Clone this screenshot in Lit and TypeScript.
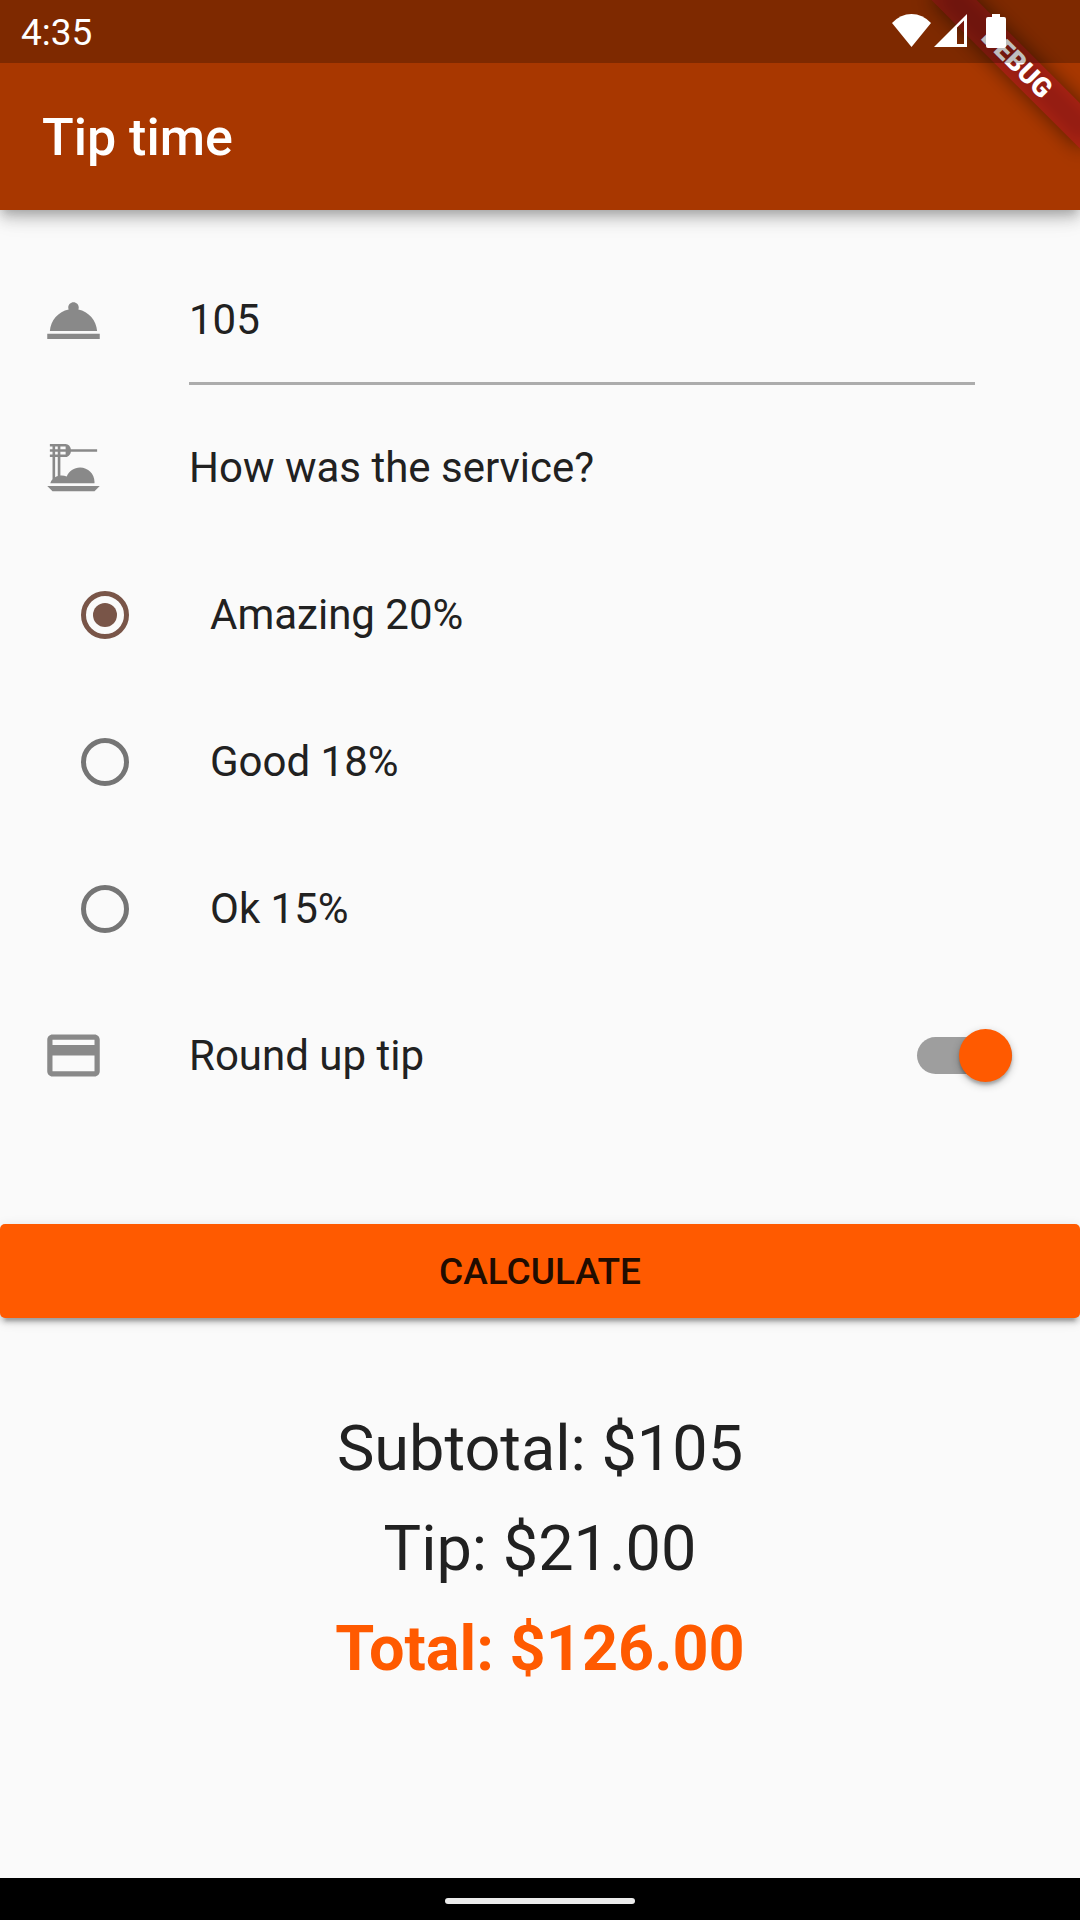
import { LitElement, html, svg, css } from "lit";
import { customElement, property, state } from "lit/decorators.js";

const ICONS = {
  bell: svg`<path d="M2 17h20v2H2zm11.84-9.21c.1-.24.16-.51.16-.79 0-1.1-.9-2-2-2s-2 .9-2 2c0 .28.06.55.16.79C6.25 8.6 3.27 11.93 3 16h18c-.27-4.07-3.25-7.4-7.16-8.21z" />`,
  dining: svg`<path fill-rule="evenodd" d="M2 19h20l-2 2H4zM5 6h1v1H5zM5 4h1v1H5zM9 4v1H7V4zM9 7H7V6h2zM6 15.23c-.36.11-.69.28-1 .47V8h1zM4 16.52c-.38.44-.68.93-.84 1.48h16.82c.01-.16.03-.33.03-.5 0-3.04-2.46-5.5-5.5-5.5-2.29 0-4.25 1.4-5.08 3.4-.64-.25-1.27-.4-1.93-.4-.17 0-.33.02-.5.04V8h2c1.03.06 1.9-.96 2-2h10V5H11c-.1-1.05-.97-1.97-2-2H3v1h1v1H3v1h1v1H3v1h1z" />`,
  card: svg`<path d="M20 4H4c-1.11 0-1.99.89-1.99 2L2 18c0 1.11.89 2 2 2h16c1.11 0 2-.89 2-2V6c0-1.11-.89-2-2-2zm0 14H4v-6h16v6zm0-10H4V6h16v2z" />`,
};

@customElement("tip-icon")
class TipIcon extends LitElement {
  @property() name: keyof typeof ICONS = "bell";

  static styles = css`
    :host {
      display: block;
      flex: none;
      width: 63px;
      height: 63px;
      color: #898989;
    }
    .glyph {
      display: block;
      width: 100%;
      height: 100%;
      fill: currentColor;
    }
  `;

  render() {
    return html`<svg class="glyph" viewBox="0 0 24 24" aria-hidden="true">${ICONS[this.name]}</svg>`;
  }
}

@customElement("status-bar")
class StatusBar extends LitElement {
  static styles = css`
    :host {
      display: flex;
      align-items: flex-start;
      justify-content: space-between;
      box-sizing: border-box;
      height: 63px;
      padding: 0 74px 0 21px;
      background: rgba(0, 0, 0, 0.25);
      color: #fff;
      font-size: 37px;
      line-height: 66px;
    }
    .icons {
      display: block;
      width: 114px;
      height: 34px;
      margin-top: 14px;
      fill: #fff;
    }
  `;

  render() {
    return html`
      <time>4:35</time>
      <svg class="icons" viewBox="0 0 114 34" aria-hidden="true">
        <path d="M19.5 33L0 9Q8.500 0 19.5 0T39 9z" />
        <path fill-rule="evenodd" d="M42 33L75 0V33zM65 13.5V30H72V6.5z" />
        <path d="M100 0h8v3h4q2 0 2 2v27q0 2-2 2h-16q-2 0-2-2V5q0-2 2-2h4z" />
      </svg>
    `;
  }
}

@customElement("app-root")
class AppRoot extends LitElement {
  @state() private cost = "105";
  @state() private rate = 20;
  @state() private roundUp = true;
  @state() private result = { subtotal: "105", tip: 21, total: 126 };

  private options = [
    { label: "Amazing 20%", rate: 20 },
    { label: "Good 18%", rate: 18 },
    { label: "Ok 15%", rate: 15 },
  ];

  static styles = css`
    :host {
      display: flex;
      flex-direction: column;
      min-height: 100vh;
      background: #fafafa;
      color: #212121;
      font-family: Roboto, "Liberation Sans", sans-serif;
      font-size: 42px;
      line-height: 50px;
    }
    .header {
      position: relative;
      background: #a83700;
      box-shadow: 0 5px 10px -3px rgba(0, 0, 0, 0.2), 0 10px 13px rgba(0, 0, 0, 0.14),
        0 3px 26px rgba(0, 0, 0, 0.12);
    }
    .status {
      position: relative;
      z-index: 2;
    }
    .title {
      display: flex;
      align-items: center;
      box-sizing: border-box;
      height: 147px;
      margin: 0;
      padding: 2px 42px 0;
      color: #fff;
      font-size: 52px;
      font-weight: 500;
      line-height: 62px;
    }
    .corner {
      position: absolute;
      top: 0;
      right: 0;
      z-index: 1;
      width: 210px;
      height: 210px;
      overflow: hidden;
      pointer-events: none;
    }
    .ribbon {
      position: absolute;
      top: 47px;
      left: 42px;
      width: 210px;
      height: 32px;
      transform: rotate(45deg);
      color: #fff;
      font-size: 27px;
      font-weight: 900;
      line-height: 32px;
      text-align: center;
    }
    .ribbon::before,
    .ribbon::after {
      content: "";
      position: absolute;
      inset: 0;
      z-index: -1;
      background: rgba(183, 28, 28, 0.63);
    }
    .ribbon::before {
      background: rgba(0, 0, 0, 0.5);
      filter: blur(10px);
    }
    .main {
      display: flex;
      flex: 1;
      flex-direction: column;
    }
    .form {
      padding-top: 37px;
    }
    .options {
      margin: 0;
      padding: 0;
      border: 0;
    }
    .row {
      display: flex;
      align-items: center;
      gap: 84px;
      height: 147px;
      padding: 0 42px;
    }
    .label {
      flex: 1;
    }
    .cost {
      flex: 1;
      min-width: 0;
      box-sizing: border-box;
      height: 129px;
      margin-right: 63px;
      padding: 0;
      border: 0;
      border-bottom: 3px solid #acacac;
      border-radius: 0;
      outline: 0;
      background: none;
      color: inherit;
      font: inherit;
    }
    .option {
      gap: 81px;
      padding-left: 81px;
    }
    .radio {
      appearance: none;
      display: grid;
      place-content: center;
      flex: none;
      box-sizing: border-box;
      width: 48px;
      height: 48px;
      margin: 0;
      border: 5px solid #757575;
      border-radius: 50%;
    }
    .radio:checked {
      border-color: #795548;
    }
    .radio:checked::before {
      content: "";
      width: 24px;
      height: 24px;
      border-radius: 50%;
      background: #795548;
    }
    .switch {
      appearance: none;
      display: flex;
      align-items: center;
      flex: none;
      width: 95px;
      height: 37px;
      margin: 0 26px 0 0;
      border-radius: 19px;
      background: #9e9e9e;
    }
    .switch::before {
      content: "";
      width: 53px;
      height: 53px;
      flex: none;
      border-radius: 50%;
      background: #fafafa;
      box-shadow: 0 3px 3px rgba(0, 0, 0, 0.2), 0 3px 8px rgba(0, 0, 0, 0.24);
    }
    .switch:checked::before {
      margin-left: auto;
      background: #ff5a00;
    }
    .calculate {
      height: 94px;
      margin: 95px 0 0;
      padding: 2px 42px 0;
      border: 0;
      border-radius: 5px;
      background: #ff5a00;
      box-shadow: 0 8px 3px -5px rgba(0, 0, 0, 0.2), 0 5px 5px rgba(0, 0, 0, 0.14),
        0 3px 13px rgba(0, 0, 0, 0.12);
      color: #210c00;
      font: inherit;
      font-size: 37px;
      font-weight: 500;
      text-transform: uppercase;
    }
    .results {
      padding: 81px 42px;
      font-size: 63px;
      line-height: 100px;
      text-align: center;
    }
    .line {
      margin: 0;
    }
    .total {
      color: #ff5a00;
      font-weight: 700;
    }
    .nav {
      display: grid;
      place-content: center;
      height: 42px;
      padding-top: 4px;
      box-sizing: border-box;
      background: #000;
    }
    .pill {
      width: 190px;
      height: 6px;
      border-radius: 3px;
      background: #ebebeb;
    }
  `;

  private calculate() {
    const amount = Number(this.cost) || 0;
    const raw = (amount * this.rate) / 100;
    const tip = this.roundUp ? Math.ceil(raw) : raw;
    this.result = { subtotal: String(amount), tip, total: amount + tip };
  }

  render() {
    const { subtotal, tip, total } = this.result;
    return html`
      <header class="header">
        <status-bar class="status"></status-bar>
        <h1 class="title">Tip time</h1>
        <div class="corner"><div class="ribbon">DEBUG</div></div>
      </header>
      <main class="main">
        <div class="form">
          <div class="row">
            <tip-icon name="bell"></tip-icon>
            <input
              class="cost"
              type="text"
              inputmode="decimal"
              aria-label="Cost of service"
              .value=${this.cost}
              @input=${(e: Event) => (this.cost = (e.target as HTMLInputElement).value)}
            />
          </div>
          <div class="options" role="radiogroup" aria-labelledby="question">
            <div class="row">
              <tip-icon name="dining"></tip-icon>
              <span class="label" id="question">How was the service?</span>
            </div>
            ${this.options.map(
              (o) => html`
                <label class="row option">
                  <input
                    class="radio"
                    type="radio"
                    name="service"
                    .checked=${o.rate === this.rate}
                    @change=${() => (this.rate = o.rate)}
                  />
                  <span class="label">${o.label}</span>
                </label>
              `
            )}
          </div>
          <label class="row">
            <tip-icon name="card"></tip-icon>
            <span class="label">Round up tip</span>
            <input
              class="switch"
              type="checkbox"
              role="switch"
              .checked=${this.roundUp}
              @change=${(e: Event) => (this.roundUp = (e.target as HTMLInputElement).checked)}
            />
          </label>
        </div>
        <button class="calculate" type="button" @click=${this.calculate}>Calculate</button>
        <section class="results" aria-live="polite">
          <p class="line">Subtotal: $${subtotal}</p>
          <p class="line">Tip: $${tip.toFixed(2)}</p>
          <p class="line total">Total: $${total.toFixed(2)}</p>
        </section>
      </main>
      <footer class="nav"><div class="pill"></div></footer>
    `;
  }
}
